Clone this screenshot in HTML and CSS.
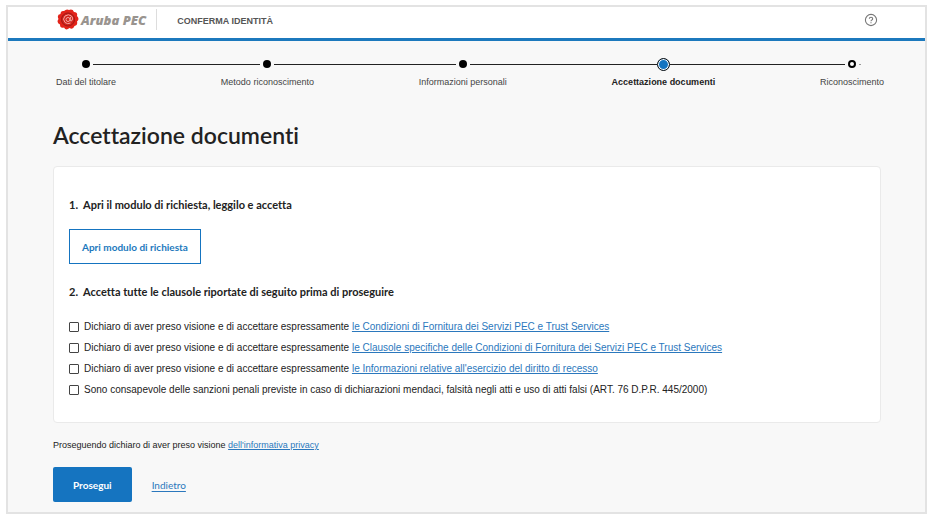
FILE: index.html
```
<!DOCTYPE html>
<html lang="it">
<head>
    <meta charset="UTF-8">
    <meta name="viewport" content="width=device-width, initial-scale=1.0">
    <title>Aruba PEC - Conferma identità</title>
    <link rel="stylesheet" href="styles.css">
</head>
<body>
    <div class="page">
        <header class="header">
            <a class="logo" href="#">
                <svg class="seal" viewBox="0 0 44 42" aria-hidden="true">
                    <path fill="#e2231a" d="M14 4Q19 -1 24 2Q31 -1 34 6Q42 6 40 14Q46 20 40 25Q42 33 35 34Q32 42 25 38Q18 44 14 37Q6 39 6 31Q-2 27 3 20Q-1 11 7 10Q7 3 14 4Z"/>
                    <circle cx="22" cy="21" r="13" fill="#d3211b" stroke="#9c1814" stroke-width="2"/>
                    <circle cx="22" cy="21" r="4" fill="none" stroke="#f3a9a3" stroke-width="2"/>
                    <path fill="none" stroke="#f3a9a3" stroke-width="2" d="M27 16l-1 6q1 4 4 1q3-5-1-9q-6-5-13 0q-6 6 0 13q5 4 11 1"/>
                </svg>
                <span class="brand">Aruba PEC</span>
            </a>
            <span class="section">CONFERMA IDENTITÀ</span>
            <button class="help" type="button" aria-label="Aiuto">
                <svg viewBox="0 0 14 14" aria-hidden="true">
                    <circle cx="7" cy="7" r="5.6" fill="none" stroke="#777" stroke-width="1.1"/>
                    <path fill="none" stroke="#777" stroke-width="1.1" d="M5.3 5.8Q5.3 4.2 7 4.2T8.7 5.7Q8.7 6.5 7.8 7Q7 7.4 7 8.3M7 9.2v1.1"/>
                </svg>
            </button>
        </header>

        <ol class="steps">
            <li class="step">
                <span class="marker"><span class="dot"></span></span>
                <span class="label">Dati del titolare</span>
            </li>
            <li class="step">
                <span class="marker"><span class="dot"></span></span>
                <span class="label">Metodo riconoscimento</span>
            </li>
            <li class="step">
                <span class="marker"><span class="dot"></span></span>
                <span class="label">Informazioni personali</span>
            </li>
            <li class="step current" aria-current="step">
                <span class="marker"><span class="dot"></span></span>
                <span class="label">Accettazione documenti</span>
            </li>
            <li class="step todo">
                <span class="marker"><span class="dot"></span></span>
                <span class="label">Riconoscimento</span>
            </li>
        </ol>

        <main class="content">
            <h1 class="title">Accettazione documenti</h1>
            <form>
                <section class="card">
                    <h2 class="heading"><span class="number">1.</span>Apri il modulo di richiesta, leggilo e accetta</h2>
                    <button class="btn outline" type="button">Apri modulo di richiesta</button>
                    <h2 class="heading"><span class="number">2.</span>Accetta tutte le clausole riportate di seguito prima di proseguire</h2>
                    <ul class="clauses">
                        <li class="clause">
                            <input type="checkbox" id="condizioni">
                            <label for="condizioni">Dichiaro di aver preso visione e di accettare espressamente <a href="#">le Condizioni di Fornitura dei Servizi PEC e Trust Services</a></label>
                        </li>
                        <li class="clause">
                            <input type="checkbox" id="clausole">
                            <label for="clausole">Dichiaro di aver preso visione e di accettare espressamente <a href="#">le Clausole specifiche delle Condizioni di Fornitura dei Servizi PEC e Trust Services</a></label>
                        </li>
                        <li class="clause">
                            <input type="checkbox" id="recesso">
                            <label for="recesso">Dichiaro di aver preso visione e di accettare espressamente <a href="#">le Informazioni relative all'esercizio del diritto di recesso</a></label>
                        </li>
                        <li class="clause">
                            <input type="checkbox" id="sanzioni">
                            <label for="sanzioni">Sono consapevole delle sanzioni penali previste in caso di dichiarazioni mendaci, falsità negli atti e uso di atti falsi (ART. 76 D.P.R. 445/2000)</label>
                        </li>
                    </ul>
                </section>
                <p class="privacy">Proseguendo dichiaro di aver preso visione <a href="#">dell'informativa privacy</a></p>
                <div class="actions">
                    <button class="btn primary" type="submit">Prosegui</button>
                    <a class="back" href="#">Indietro</a>
                </div>
            </form>
        </main>
    </div>
</body>
</html>
```
FILE: styles.css
```
* {
    box-sizing: border-box;
}
body {
    margin: 5px 8px 0 6px;
    background-color: #fff;
    color: #222;
    font-family: "Liberation Sans", Arial, sans-serif;
    font-size: 10px;
    font-variant-ligatures: none;
}
a {
    color: #2b78bd;
}
.page {
    border: 2px solid #e3e3e3;
    background-color: #f8f8f8;
}

/* header */
.header {
    display: flex;
    align-items: center;
    height: 34px;
    padding: 0 47px 6px 49px;
    background-color: #fff;
    border-bottom: 3px solid #1c79bd;
}
.logo {
    display: flex;
    align-items: center;
    gap: 2px;
    padding-right: 10px;
    border-right: 1px solid #ddd;
    text-decoration: none;
}
.seal {
    width: 22px;
    height: 21px;
}
.brand {
    color: #99948f;
    font-family: "Open Sans", sans-serif;
    font-size: 13px;
    font-style: italic;
    font-weight: 800;
    line-height: 20px;
}
.section {
    margin-left: 20px;
    padding-top: 2px;
    color: #555;
    font-size: 9px;
    font-weight: bold;
}
.help {
    width: 14px;
    height: 14px;
    margin-left: auto;
    padding: 0;
    border: 0;
    background: none;
}
.help svg {
    display: block;
}

/* steps */
.steps {
    display: flex;
    margin: 0;
    padding: 15px 41px 0 48px;
    list-style: none;
}
.step {
    display: grid;
    flex: 2 0 auto;
    grid-template-columns: 1fr auto 1fr;
}
.step::before,
.step::after,
.marker::before,
.marker::after {
    content: "";
    flex: 1;
    align-self: center;
    height: 1px;
    background-color: #222;
}
.step::before {
    grid-column: 1;
    grid-row: 1;
}
.step::after {
    grid-column: 3;
    grid-row: 1;
}
.marker {
    display: flex;
    grid-column: 2;
    grid-row: 1;
    align-items: center;
    gap: 3px;
    height: 16px;
}
.label {
    grid-column: 2;
    margin-top: 4px;
    color: #444;
    font-size: 9px;
    line-height: 12px;
    white-space: nowrap;
}
.step:first-child {
    flex-grow: 1;
    grid-template-columns: 0 auto 1fr;
}
.step:last-child {
    flex-grow: 1;
    grid-template-columns: 1fr auto 0;
}
.step:first-child .marker::before {
    visibility: hidden;
}
.step:last-child .marker::after {
    background: linear-gradient(to right, #999 2px, transparent 2px);
}
.dot {
    width: 8px;
    height: 8px;
    border-radius: 50%;
    background-color: #000;
}
.current .marker {
    gap: 0;
}
.current .dot {
    width: 13px;
    height: 13px;
    border: 1px solid #111;
    background-color: #1574c0;
    box-shadow: inset 0 0 0 1px #fff;
}
.current .label {
    color: #222;
    font-weight: bold;
}
.todo .dot {
    border: 2px solid #000;
    background-color: #fff;
}

/* content */
.content {
    padding: 32px 44px 10px 45px;
}
.title {
    margin: 0 0 16px;
    font-family: Lato, sans-serif;
    font-size: 23px;
    font-weight: 600;
    line-height: 30px;
}
.card {
    padding: 30px 15px 22px;
    border: 1px solid #eaeaea;
    border-radius: 4px;
    background-color: #fff;
}
.heading {
    display: flex;
    margin: 0;
    font-family: Lato, sans-serif;
    font-size: 11px;
    font-weight: bold;
    line-height: 16px;
}
.number {
    width: 14px;
}
.btn {
    height: 35px;
    font-family: Lato, sans-serif;
    font-size: 10px;
    font-weight: bold;
}
.outline {
    margin: 16px 0 20px;
    padding: 0 12px;
    border: 1px solid #1574c0;
    background-color: #fff;
    color: #1c79bd;
}
.clauses {
    margin: 16px 0 0;
    padding: 0;
    list-style: none;
}
.clause {
    display: flex;
    align-items: center;
    gap: 5px;
    min-height: 21px;
}
.clause input {
    appearance: none;
    width: 10px;
    height: 10px;
    margin: 0;
    border: 1px solid #444;
    border-radius: 1px;
    background-color: #fff;
}
.clause input:checked {
    background-color: #1574c0;
}
.privacy {
    margin: 16px 0;
    font-size: 9px;
    line-height: 12px;
}
.actions {
    display: flex;
    align-items: center;
    gap: 20px;
}
.primary {
    padding: 0 20px;
    border: 0;
    border-radius: 2px;
    background-color: #1574c0;
    color: #fff;
}
.back {
    font-family: Lato, sans-serif;
    text-underline-offset: 2px;
}
```
